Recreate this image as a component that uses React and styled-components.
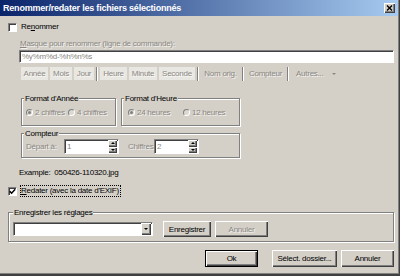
import styled, { createGlobalStyle, css } from "styled-components";

const GlobalStyle = createGlobalStyle`
  html, body {
    margin: 0;
    padding: 0;
    background: #d4d0c8;
  }
  body {
    font-family: "Liberation Sans", Arial, sans-serif;
    font-size: 8px;
    letter-spacing: -0.25px;
    color: #000;
  }
  * {
    box-sizing: border-box;
  }
`;

const disabledText = css`
  color: #8a8782;
  text-shadow: 1px 1px 0 rgba(255, 255, 255, 0.75);
`;

const raised = css`
  background: #d4d0c8;
  box-shadow: inset 1px 1px 0 #fff, inset -1px -1px 0 #404040,
    inset -2px -2px 0 #808080;
`;

const sunken = css`
  border: 1px solid;
  border-color: #808080 #fff #fff #808080;
  box-shadow: inset 1px 1px 0 #404040;
`;

const Window = styled.div`
  width: 400px;
  height: 276px;
  display: flex;
  flex-direction: column;
  background: #d4d0c8;
  border-right: 1px solid #404040;
  border-bottom: 2px solid #404040;
  box-shadow: inset -1px -1px 0 #808080;
  overflow: hidden;
`;

const TitleBar = styled.div`
  height: 16px;
  flex: none;
  display: flex;
  align-items: center;
  justify-content: space-between;
  padding: 0 3px 0 3px;
  margin-right: 1px;
  background: linear-gradient(to right, #0a246a, #a6caf0);
  color: #fff;
  font-weight: bold;
  font-size: 9px;
  letter-spacing: -0.2px;
`;

const CloseBtn = styled.span`
  ${raised};
  width: 11px;
  height: 10px;
  display: flex;
  align-items: center;
  justify-content: center;
`;

const Body = styled.div`
  flex: 1;
  display: flex;
  flex-direction: column;
  padding: 0 5px 0 8px;
`;

const CheckRow = styled.div`
  display: flex;
  align-items: center;
  height: 12px;
  margin-top: ${(p) => p.$mt}px;
`;

const Check = styled.span`
  ${sunken};
  width: 9px;
  height: 9px;
  background: #fff;
  display: flex;
  align-items: center;
  justify-content: center;
  flex: none;
`;

const CheckLabel = styled.span`
  margin-left: ${(p) => (p.$focus ? 3 : 4)}px;
  line-height: 10px;
  white-space: nowrap;
  ${(p) =>
    p.$focus &&
    css`
      border: 1px dotted #000;
      padding: 0 1px 1px 0;
      line-height: 9px;
    `}
`;

const Indent = styled.div`
  display: flex;
  flex-direction: column;
  margin-left: 11px;
`;

const Caption = styled.div`
  line-height: 10px;
  height: 10px;
  white-space: nowrap;
  margin-top: ${(p) => p.$mt || 0}px;
  margin-left: ${(p) => p.$ml || 0}px;
  ${(p) => p.$disabled && disabledText};
`;

const Field = styled.div`
  ${sunken};
  background: #fff;
  height: ${(p) => p.$h}px;
  width: ${(p) => (p.$w ? `${p.$w}px` : "auto")};
  margin-top: ${(p) => p.$mt || 0}px;
  display: flex;
  align-items: center;
  justify-content: space-between;
  padding: 0 0 0 2px;
  line-height: 10px;
  flex: none;
`;

const FieldText = styled.span`
  ${disabledText};
  text-shadow: none;
  white-space: nowrap;
`;

const Toolbar = styled.div`
  display: flex;
  align-items: center;
  gap: 2px;
  height: 13px;
  margin-top: 4px;
  padding-left: 2px;
`;

const ToolBtn = styled.span`
  ${disabledText};
  width: ${(p) => p.$w}px;
  height: 13px;
  line-height: 13px;
  display: flex;
  align-items: center;
  justify-content: ${(p) => (p.$left ? "flex-start" : "center")};
  padding-left: ${(p) => (p.$left ? 5 : 0)}px;
  background: ${(p) => (p.$lit ? "#e9e7e2" : "transparent")};
  white-space: nowrap;
`;

const Sep = styled.span`
  width: 2px;
  height: 14px;
  border-left: 1px solid #808080;
  border-right: 1px solid #fff;
`;

const SmallArrow = styled.span`
  width: 0;
  height: 0;
  margin-left: 8px;
  border-left: 2px solid transparent;
  border-right: 2px solid transparent;
  border-top: 2px solid #8a8782;
`;

const GroupRow = styled.div`
  display: flex;
  gap: 5px;
  margin-top: 18px;
  margin-left: 2px;
`;

const Group = styled.div`
  position: relative;
  width: ${(p) => (p.$w ? `${p.$w}px` : "auto")};
  margin-top: ${(p) => p.$mt || 0}px;
  margin-left: ${(p) => p.$ml || 0}px;
  padding: ${(p) => p.$pad};
  border: 1px solid #808080;
  box-shadow: inset 1px 1px 0 #fff, 1px 1px 0 #fff;
  display: flex;
  align-items: center;
`;

const GroupTitle = styled.span`
  position: absolute;
  top: -5px;
  left: ${(p) => p.$left}px;
  padding: 0 1px;
  line-height: 10px;
  background: #d4d0c8;
  white-space: nowrap;
`;

const RadioOpt = styled.span`
  display: flex;
  align-items: center;
  width: ${(p) => (p.$w ? `${p.$w}px` : "auto")};
  height: 10px;
  ${disabledText};
  white-space: nowrap;
`;

const Radio = styled.span`
  width: 7px;
  height: 7px;
  border-radius: 50%;
  border: 1px solid;
  border-color: #808080 #fff #fff #808080;
  background: #dcd9d2;
  margin-right: 2px;
  display: flex;
  align-items: center;
  justify-content: center;
  flex: none;
  &::after {
    content: "";
    display: ${(p) => (p.$on ? "block" : "none")};
    width: 3px;
    height: 3px;
    border-radius: 50%;
    background: #808080;
  }
`;

const SpinBox = styled.span`
  display: flex;
  flex-direction: column;
  width: 9px;
  height: 13px;
  margin-right: 1px;
`;

const SpinHalf = styled.span`
  ${raised};
  flex: 1;
  display: flex;
  align-items: center;
  justify-content: center;
`;

const Tri = styled.span`
  width: 0;
  height: 0;
  border-left: ${(p) => p.$size}px solid transparent;
  border-right: ${(p) => p.$size}px solid transparent;
  ${(p) =>
    p.$down
      ? css`
          border-top: ${p.$size}px solid #000;
        `
      : css`
          border-bottom: ${p.$size}px solid #000;
        `}
`;

const Example = styled.div`
  line-height: 10px;
  margin-top: 10px;
  white-space: pre;
`;

const Button = styled.button`
  ${raised};
  font: inherit;
  letter-spacing: inherit;
  border: none;
  padding: 0;
  width: ${(p) => p.$w}px;
  height: ${(p) => p.$h}px;
  margin-left: ${(p) => p.$ml || 0}px;
  color: #000;
  flex: none;
  ${(p) => p.$disabled && disabledText};
  ${(p) =>
    p.$default &&
    css`
      border: 1px solid #000;
    `}
`;

const DropBtn = styled.span`
  ${raised};
  width: 10px;
  height: 12px;
  display: flex;
  align-items: center;
  justify-content: center;
`;

const Footer = styled.div`
  display: flex;
  justify-content: flex-end;
  margin-top: 8px;
`;

const U = styled.span`
  text-decoration: underline;
`;

const Spinner = ({ w, value }) => (
  <Field $h={15} $w={w}>
    <FieldText>{value}</FieldText>
    <SpinBox>
      <SpinHalf>
        <Tri $size={2} />
      </SpinHalf>
      <SpinHalf>
        <Tri $size={2} $down />
      </SpinHalf>
    </SpinBox>
  </Field>
);

const tools = [
  { label: "Année", w: 27, lit: true },
  { label: "Mois", w: 22, lit: true },
  { label: "Jour", w: 20, lit: true },
  { sep: true },
  { label: "Heure", w: 27, lit: true },
  { label: "Minute", w: 28, lit: true },
  { label: "Seconde", w: 36, lit: true },
  { sep: true },
  { label: "Nom orig.", w: 39 },
  { sep: true },
  { label: "Compteur", w: 39 },
  { sep: true },
];

export default function App() {
  return (
    <>
      <GlobalStyle />
      <Window>
        <TitleBar>
          <span>Renommer/redater les fichiers sélectionnés</span>
          <CloseBtn>
            <svg width="7" height="6" viewBox="0 0 7 6">
              <path d="M1 0.5 L6 5.5 M6 0.5 L1 5.5" stroke="#000" strokeWidth="1.4" />
            </svg>
          </CloseBtn>
        </TitleBar>
        <Body>
          <CheckRow $mt={5}>
            <Check />
            <CheckLabel>
              Re<U>n</U>ommer
            </CheckLabel>
          </CheckRow>
          <Indent>
            <Caption $mt={6} $ml={1} $disabled>
              <U>M</U>asque pour renommer (ligne de commande):
            </Caption>
            <Field $h={13} $mt={1}>
              <FieldText>%y%m%d-%h%n%s</FieldText>
            </Field>
            <Toolbar>
              {tools.map((t, i) =>
                t.sep ? (
                  <Sep key={i} />
                ) : (
                  <ToolBtn key={i} $w={t.w} $lit={t.lit}>
                    {t.label}
                  </ToolBtn>
                )
              )}
              <ToolBtn $w={44} $left>
                Autres...
                <SmallArrow />
              </ToolBtn>
            </Toolbar>
            <GroupRow>
              <Group $w={95} $pad="8px 0 8px 4px">
                <GroupTitle $left={2}>Format d'Année</GroupTitle>
                <RadioOpt $w={42}>
                  <Radio $on />2 chiffres
                </RadioOpt>
                <RadioOpt>
                  <Radio />4 chiffres
                </RadioOpt>
              </Group>
              <Group $w={119} $pad="8px 0 8px 6px">
                <GroupTitle $left={2}>Format d'Heure</GroupTitle>
                <RadioOpt $w={55}>
                  <Radio $on />24 heures
                </RadioOpt>
                <RadioOpt>
                  <Radio />12 heures
                </RadioOpt>
              </Group>
            </GroupRow>
            <Group $w={219} $mt={7} $ml={2} $pad="5px 0 3px 4px">
              <GroupTitle $left={2}>Compteur</GroupTitle>
              <Caption $disabled style={{ width: 38 }}>
                Départ à:
              </Caption>
              <Spinner w={55} value="1" />
              <Caption $disabled $ml={9} style={{ width: 26 }}>
                Chiffres:
              </Caption>
              <Spinner w={45} value="2" />
            </Group>
            <Example>Example:  050426-110320.jpg</Example>
          </Indent>
          <CheckRow $mt={7}>
            <Check>
              <svg width="7" height="7" viewBox="0 0 7 7">
                <path d="M0.8 3.2 L2.6 5.2 L6.2 1.2" fill="none" stroke="#000" strokeWidth="1.5" />
              </svg>
            </Check>
            <CheckLabel $focus>
              <U>R</U>edater (avec la date d'EXIF)
            </CheckLabel>
          </CheckRow>
          <Group $mt={15} $pad="8px 0 4px 4px">
            <GroupTitle $left={4}>Enregistrer les réglages</GroupTitle>
            <Field $h={14} $w={140} style={{ paddingRight: 1 }}>
              <span />
              <DropBtn>
                <Tri $size={2.5} $down />
              </DropBtn>
            </Field>
            <Button $w={48} $h={16} $ml={10}>
              Enregistrer
            </Button>
            <Button $w={53} $h={16} $ml={4} $disabled>
              Annuler
            </Button>
          </Group>
          <Footer>
            <Button $w={53} $h={17} $default>
              Ok
            </Button>
            <Button $w={65} $h={17} $ml={14}>
              Sélect. dossier...
            </Button>
            <Button $w={53} $h={17} $ml={4}>
              Annuler
            </Button>
          </Footer>
        </Body>
      </Window>
    </>
  );
}
